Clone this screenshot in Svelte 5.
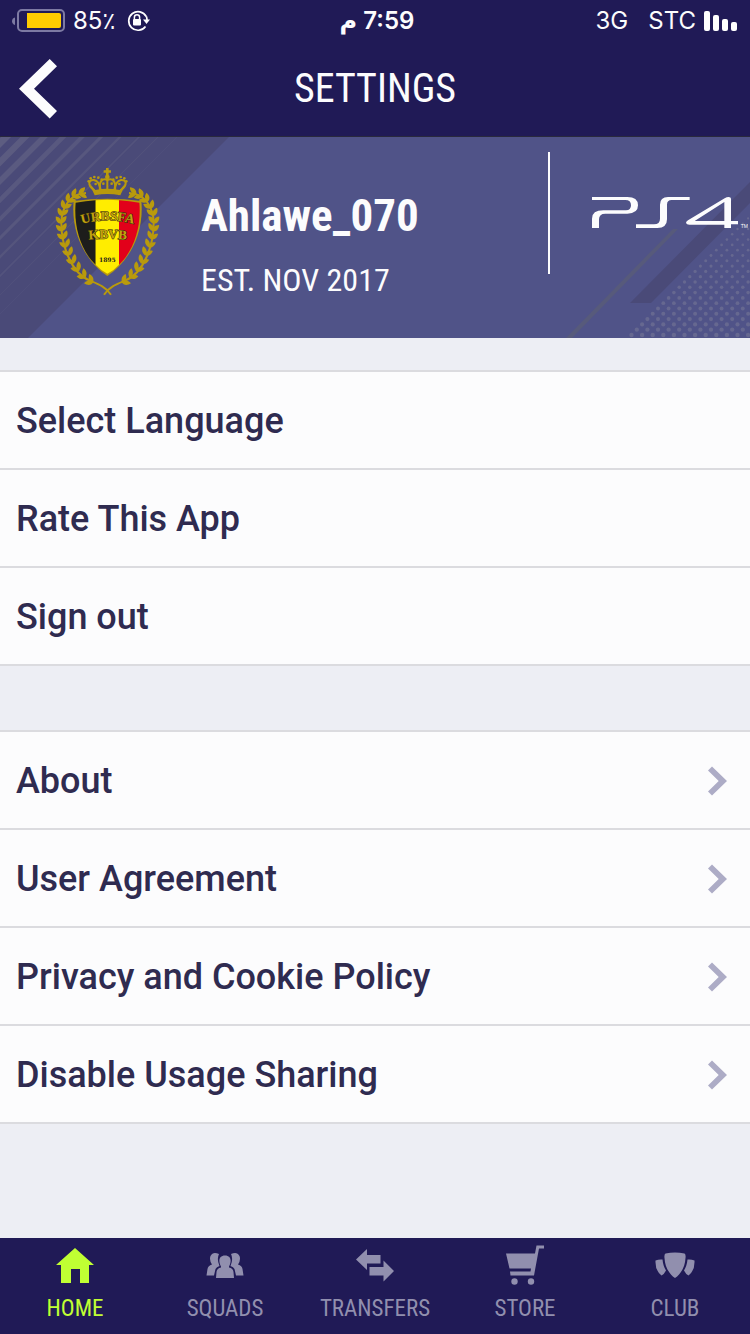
<script lang="ts">
  interface Row {
    label: string;
    href?: string;
  }

  const ACTIONS: Row[] = [
    { label: "Select Language" },
    { label: "Rate This App" },
    { label: "Sign out" },
  ];

  const LINKS: Row[] = [
    { label: "About", href: "#about" },
    { label: "User Agreement", href: "#agreement" },
    { label: "Privacy and Cookie Policy", href: "#privacy" },
    { label: "Disable Usage Sharing", href: "#usage" },
  ];

  const TABS = [
    { id: "home", label: "HOME" },
    { id: "squads", label: "SQUADS" },
    { id: "transfers", label: "TRANSFERS" },
    { id: "store", label: "STORE" },
    { id: "club", label: "CLUB" },
  ];

  let activeTab = $state("home");

  // diagonal stripes, thinner and fainter to the right
  const STRIPES = Array.from({ length: 10 }, (_, i) => ({
    x: 6 + i * 19,
    w: Math.max(1, 10 - i * 1.1),
    o: 1 - i * 0.07,
  }));

  // halftone dots filling the bottom right corner
  const DOTS: Array<{ x: number; y: number; r: number }> = [];
  for (let row = 0; row < 23; row++) {
    for (let x = 91.5 + row * 5.3; x < 212; x += 10.6) {
      DOTS.push({ x, y: 198 - row * 5.3, r: 2.2 - row * 0.05 });
    }
  }

  // laurel leaves of the left branch: x, y, direction in degrees
  const STEM = [
    [88, 101, -8], [68, 109, -28], [53, 124, -45], [42, 144, -62], [36, 166, -78], [34, 189, -90],
    [37, 212, -98], [42, 236, -106], [50, 260, -110], [60, 284, -114], [72, 308, -120],
    [87, 330, -128], [106, 350, -138], [128, 366, -148],
  ];
  const LEAVES = STEM.flatMap(([x, y, a]) => [
    { x, y, a: a - 38 },
    { x, y, a: a + 38 },
  ]);
</script>

{#snippet branch()}
  <path d="M108 99C62 100 34 140 34 190C34 250 60 338 120 362C142 371 168 380 183 404" fill="none" stroke="#b99a0c" stroke-width="6" />
  {#each LEAVES as l}
    <path d="M-2 0C4 -10 16 -10 26 -1C17 8 6 7 -2 0Z" transform="translate({l.x} {l.y}) rotate({l.a})" />
  {/each}
{/snippet}

<div class="screen">
  <header class="top">
    <div class="status">
      <div class="status-side">
        <svg width="53" height="24" viewBox="0 0 53 24" aria-hidden="true">
          <path d="M3 8.5V16Q0 15 0 12.2T3 8.5Z" fill="#7d7aa3" />
          <rect x="6" y="1" width="46" height="21" rx="4" fill="none" stroke="#7d7aa3" stroke-width="2" />
          <path d="M15 4H47Q49 4 49 6V17Q49 19 47 19H15Z" fill="#ffcc00" />
        </svg>
        <span>85٪</span>
        <svg class="lock" width="24" height="22" viewBox="0 0 24 22" aria-hidden="true">
          <path d="M19.2 6.5A9.3 9.3 0 1 0 18.5 16.5" fill="none" stroke="#fff" stroke-width="1.7" />
          <path d="M19.3 6.2Q20 8 20 10" fill="none" stroke="#fff" stroke-width="1.7" />
          <path d="M16 9.5H23L19.5 14Z" fill="#fff" />
          <rect x="6" y="9" width="8" height="6.5" rx="1" fill="#fff" />
          <path d="M7.4 9.5V7.3Q7.4 4.8 10 4.8T12.6 7.3V9.5" fill="none" stroke="#fff" stroke-width="1.5" />
        </svg>
      </div>
      <span class="time" dir="rtl">7:59 م</span>
      <div class="status-side end">
        <span>3G</span>
        <span class="carrier">STC</span>
        <svg width="34" height="20" viewBox="0 0 34 20" fill="#fff" aria-hidden="true">
          <rect x="0" width="6" height="20" rx="2" />
          <rect x="9" y="4" width="6" height="16" rx="2" />
          <rect x="18" y="8" width="6" height="12" rx="2" />
          <rect x="27" y="11" width="6" height="9" rx="2" />
        </svg>
      </div>
    </div>
    <div class="nav">
      <button class="back" aria-label="Back">
        <svg width="38" height="60" viewBox="0 0 38 60"><path d="M30.700 0L38 7.300L15 29.700L38 52L30.700 59.500L0 29.700Z" fill="#fcfcfd" /></svg>
      </button>
      <h1>SETTINGS</h1>
    </div>
  </header>

  <section class="banner">
    <svg class="art left" width="240" height="201" viewBox="0 0 240 201" aria-hidden="true">
      <path d="M0 0H229L28 201H0Z" fill="#4a4a78" />
      {#each STRIPES as s}
        <path d="M{s.x - s.w / 2} 0H{s.x + s.w / 2}L{s.x + s.w / 2 - 201} 201H{s.x - s.w / 2 - 201}Z" fill="#5d5d81" opacity={s.o} />
      {/each}
    </svg>
    <svg class="art right" width="210" height="201" viewBox="0 0 210 201" aria-hidden="true">
      <path d="M26 201L133 92H138L32 201Z" fill="#575a7b" />
      <path d="M90 166L210 45V66L111 166Z" fill="#4a4a78" />
      {#each DOTS as d}
        <circle cx={d.x} cy={d.y} r={d.r} fill="#666890" />
      {/each}
    </svg>

    <svg class="crest" width="115" height="140" viewBox="0 0 345 420" fill="#b99a0c" role="img" aria-label="Club crest">
      <g>{@render branch()}</g>
      <g transform="translate(345 0) scale(-1 1)">{@render branch()}</g>

      <path d="M168 24H176V31H183V38H176V47H168V38H161V31H168Z" />
      <circle cx="172" cy="51" r="7" />
      <g fill="none" stroke="#b99a0c" stroke-width="6">
        <path d="M134 92C110 76 116 58 132 60C148 63 150 80 150 92" />
        <path d="M211 92C235 76 229 58 213 60C197 63 195 80 195 92" />
        <path d="M152 90C144 62 160 54 172 60C185 54 201 62 193 90" />
        <path d="M172 58V92" />
      </g>
      <path d="M117 68L134 106Q172 98 211 106L228 68L209 90Q172 82 136 90Z" />
      {#each [[116, 64], [122, 55], [133, 51], [145, 53], [155, 59], [190, 59], [200, 53], [212, 51], [223, 55], [229, 64], [160, 71], [185, 71], [137, 72], [208, 72]] as [x, y]}
        <circle cx={x} cy={y} r="4" />
      {/each}

      <path d="M71 123Q172 110 274 123C283 220 238 304 172 348C107 304 62 220 71 123Z" />
      <path d="M77 128Q107 123 137 121V314C96 276 70 206 77 128Z" fill="#1d1d1b" />
      <path d="M137 121Q172 118 207 121V314Q191 332 172 341Q154 332 137 314Z" fill="#ffed00" />
      <path d="M207 121Q238 123 268 128C275 206 248 276 207 314Z" fill="#e2001a" />
      <path id="arc-top" d="M88 194Q172 168 258 194" fill="none" />
      <path id="arc-mid" d="M106 240Q172 232 240 240" fill="none" />
      <text class="crest-text"><textPath href="#arc-top" startOffset="50%" text-anchor="middle">URBSFA</textPath></text>
      <text class="crest-text"><textPath href="#arc-mid" startOffset="50%" text-anchor="middle">KBVB</textPath></text>
      <text class="crest-year" x="172" y="305" text-anchor="middle">1895</text>
    </svg>

    <div class="profile">
      <h2>Ahlawe_070</h2>
      <p>EST. NOV 2017</p>
    </div>

    <div class="platform">
      <svg width="156" height="32" viewBox="156 201 468 96" fill="#fcfcfd" role="img" aria-label="PS4">
        <path d="M156 201H262Q294 201 294 226Q294 251 262 251H196Q177 251 177 268V294H156V266Q156 241 190 241H258Q273 241 273 226Q273 210 256 210H156Z" />
        <path d="M288 283H342Q360 283 360 266V224Q360 201 384 201H449V210H395Q381 210 381 224V268Q381 294 352 294H288Z" />
        <path fill-rule="evenodd" d="M573 206Q573 201 566 201Q560 201 554 205L444 271Q438 275 438 279Q440 284 448 284H553V294H573V283H594V273H573ZM553 216V273H464Z" />
        <text class="tm" x="602" y="294">TM</text>
      </svg>
    </div>
  </section>

  <main>
    <ul class="list">
      {#each ACTIONS as row}
        <li><button class="row">{row.label}</button></li>
      {/each}
    </ul>

    <ul class="list">
      {#each LINKS as row}
        <li>
          <a class="row" href={row.href}>
            {row.label}
            <svg width="20" height="30" viewBox="0 0 20 30" aria-hidden="true"><path d="M4 0.500L19 15L4 29.500L0 25.500L10.700 15L0 4.500Z" fill="#adacc6" /></svg>
          </a>
        </li>
      {/each}
    </ul>
  </main>

  <nav class="tabs" aria-label="Main">
    {#each TABS as tab}
      <button class="tab" class:active={activeTab === tab.id} onclick={() => (activeTab = tab.id)}>
        <svg width="40" height="40" viewBox="0 0 40 40" fill="currentColor" aria-hidden="true">
          {#if tab.id === "home"}
            <path d="M20 3L39 20H34V38H25V24H16V38H6V20H1Z" />
          {:else if tab.id === "squads"}
            <path d="M14 9Q8 6 5.500 11Q4 15 7 19.500Q3 20.500 2.500 24L1.500 30.500H9L10.500 24Q11.500 22 14.500 21Q11.500 14 14 9Z" />
            <path d="M26 9Q32 6 34.500 11Q36 15 33 19.500Q37 20.500 37.500 24L38.500 30.500H31L29.500 24Q28.500 22 25.500 21Q28.500 14 26 9Z" />
            <path d="M20 10.500C14 10.500 13 16 16 21.500V22.500Q12 23 11.500 27L11 33H29L28.500 27Q28 23 24 22.500V21.500C27 16 26 10.500 20 10.500Z" />
          {:else if tab.id === "transfers"}
            <path d="M1 14.500L12 4V10H25.500V18.500H12V25Z" />
            <path d="M14.500 22H28.500V15.500L39 26L28.500 36.500V30.500H14.500Z" />
          {:else if tab.id === "store"}
            <path d="M1 8.500H30L31.500 0.500H39V3.500H34L29 30.500H5.500L5 26.500H25.500L26 23.500H4.500Z" />
            <circle cx="9.500" cy="36.500" r="3.200" />
            <circle cx="26" cy="36.500" r="3.200" />
          {:else}
            <path d="M10.500 8.500Q20 6.500 29.500 8.500Q31 9.500 30.500 13C30 22 26 29 20 33C14 29 10 22 9.500 13Q9 9.500 10.500 8.500Z" />
            <path d="M0.500 15.500Q4 14 7.500 14.500C8 19 9 22 11 25.500Q9 29.500 6.500 30.500Q0 25.500 0.500 15.500Z" />
            <path d="M39.500 15.500Q36 14 32.500 14.500C32 19 31 22 29 25.500Q31 29.500 33.500 30.500Q40 25.500 39.500 15.500Z" />
          {/if}
        </svg>
        <span>{tab.label}</span>
      </button>
    {/each}
  </nav>
</div>

<style>
  :global(body) { background: #edeef4; }
  .screen {
    --navy: #201a56;
    --narrow: "Roboto Condensed", "Liberation Sans Narrow", "Arial Narrow", sans-serif;
    min-height: 100vh;
    display: flex;
    flex-direction: column;
    font-family: Roboto, sans-serif;
    color: #2f2b50;
  }
  h1, h2, p, ul { margin: 0; padding: 0; }
  button { border: none; background: none; padding: 0; margin: 0; font: inherit; color: inherit; cursor: pointer; }
  svg { display: block; flex: none; }

  .top { background: var(--navy); color: #fcfcfd; border-bottom: 1px solid #29293d; }
  .status {
    display: grid;
    grid-template-columns: 1fr auto 1fr;
    align-items: center;
    padding: 0 12px;
    font: 24px/42px Inter, "DejaVu Sans", sans-serif;
  }
  .status-side { display: flex; align-items: center; gap: 8px; }
  .end { justify-content: flex-end; }
  .carrier { margin-left: 12px; }
  .lock { margin-left: 4px; }
  .time { font-weight: 600; padding-left: 4px; }
  .nav { display: grid; grid-template-columns: 80px 1fr 80px; align-items: center; height: 94px; }
  .back { padding: 0 0 0 19px; }
  h1 { text-align: center; font: 400 40px/56px var(--narrow); }

  .banner {
    position: relative;
    display: flex;
    align-items: center;
    height: 201px;
    padding-left: 50px;
    background: #505388;
    color: #fcfcfd;
    overflow: hidden;
  }
  .art { position: absolute; top: 0; }
  .left { left: 0; }
  .right { right: 0; }
  .crest { position: relative; margin-bottom: 16px; }
  .crest-text {
    font: 700 40px "Liberation Serif", serif;
    fill: #c2a20e;
    stroke: #3b310c;
    stroke-width: 3px;
    paint-order: stroke;
  }
  .crest-year { font: 700 18px "DejaVu Serif", serif; fill: #1d1d1b; }
  .profile { position: relative; flex: 1; margin-left: 36px; padding-top: 20px; }
  h2 { font: 700 45px/64px var(--narrow); }
  p { font: 400 32px/64px var(--narrow); }
  .platform {
    position: relative;
    align-self: flex-start;
    display: flex;
    align-items: center;
    height: 122px;
    margin-top: 15px;
    padding: 0 2px 0 42px;
    border-left: 2px solid #fcfcfd;
  }
  .tm { font: 15px "Liberation Sans", sans-serif; }

  main { flex: 1; padding: 32px 0; display: flex; flex-direction: column; gap: 64px; }
  .list { list-style: none; border-top: 2px solid #dbdbdf; }
  .list li { border-bottom: 2px solid #dbdbdf; background: #fcfcfd; }
  .row {
    display: flex;
    align-items: center;
    justify-content: space-between;
    box-sizing: border-box;
    width: 100%;
    height: 96px;
    padding: 2px 22px 0 16px;
    font-size: 36px;
    font-weight: 500;
    color: inherit;
    text-decoration: none;
    text-align: left;
  }

  .tabs { display: grid; grid-template-columns: repeat(5, 1fr); height: 96px; background: var(--navy); }
  .tab {
    display: flex;
    flex-direction: column;
    align-items: center;
    padding-top: 7px;
    color: #918fae;
    font: 400 23px/32px var(--narrow);
  }
  .tab span { margin-top: 8px; }
  .active { color: #c0ff33; }
</style>
